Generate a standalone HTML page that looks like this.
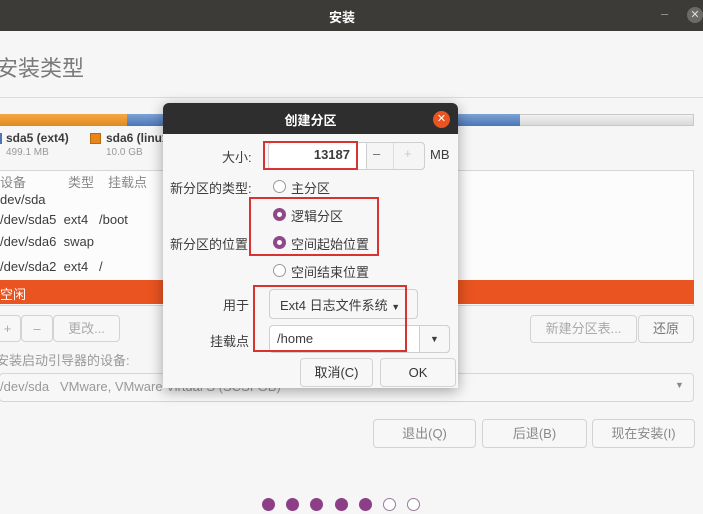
<!DOCTYPE html>
<html><head><meta charset="utf-8"><style>
*{margin:0;padding:0;box-sizing:border-box}
body{width:703px;height:514px;overflow:hidden;background:#f6f6f6;position:relative;font-family:"Liberation Sans","Noto Sans CJK SC",sans-serif;font-size:13px;color:#3c3c3c}
.a{position:absolute;white-space:nowrap}
.btn{position:absolute;border:1px solid #d3d3d3;border-radius:4px;background:#f7f7f7;color:#aaa;text-align:center;font-size:13px}
.rb{position:absolute;border:2px solid #d93232}
.radio{position:absolute;width:13px;height:13px;border-radius:50%;border:1px solid #9a9a9a;background:#fff}
.radio.on{border:none;background:#8f4889}
.radio.on::after{content:"";position:absolute;left:4px;top:4px;width:5px;height:5px;border-radius:50%;background:#fff}
.dot{position:absolute;top:498px;width:13px;height:13px;border-radius:50%;background:#8c3f86}
.dot.o{background:#fff;border:1px solid #9a7a98}
</style></head><body>
<div class="a" style="left:0;top:0;width:703px;height:31px;background:#3c3b37"></div>
<div class="a" style="left:0;top:7px;width:684px;text-align:center;color:#fff;font-weight:bold;font-size:13px">安装</div>
<div class="a" style="left:661px;top:6px;color:#999;font-size:13px">–</div>
<div class="a" style="left:687px;top:7px;width:16px;height:16px;border-radius:50%;background:#6b6a66;color:#ddd;font-size:11px;text-align:center;line-height:16px">✕</div>
<div class="a" style="left:-4px;top:51px;font-size:22px;color:#7a7a7a">安装类型</div>
<div class="a" style="left:0;top:97px;width:703px;height:1px;background:#dcdcdc"></div>
<!-- bar -->
<div class="a" style="left:0;top:114px;width:694px;height:12px;background:linear-gradient(#f0f0f0,#d9d9d9);border:1px solid #c8c8c8"></div>
<div class="a" style="left:0;top:114px;width:127px;height:12px;background:linear-gradient(#f4a84a,#e08a20)"></div>
<div class="a" style="left:127px;top:114px;width:393px;height:12px;background:linear-gradient(#7ea1d4,#4a76b8)"></div>
<div class="a" style="left:-4px;top:133px;width:6px;height:11px;background:#4a76b8"></div>
<div class="a" style="left:6px;top:131px;font-weight:bold;font-size:12px">sda5 (ext4)</div>
<div class="a" style="left:6px;top:147px;font-size:10px;color:#999">499.1 MB</div>
<div class="a" style="left:90px;top:133px;width:11px;height:11px;background:#e8861a;border:1px solid #b86a10"></div>
<div class="a" style="left:106px;top:131px;font-weight:bold;font-size:12px">sda6 (linux-swap)</div>
<div class="a" style="left:106px;top:147px;font-size:10px;color:#999">10.0 GB</div>
<!-- table -->
<div class="a" style="left:-1px;top:170px;width:695px;height:136px;border:1px solid #d6d6d6;background:#fcfcfc"></div>
<div class="a" style="left:0;top:172px;color:#888">设备</div>
<div class="a" style="left:68px;top:172px;color:#888">类型</div>
<div class="a" style="left:108px;top:172px;color:#888">挂载点</div>
<div class="a" style="left:0;top:192px">dev/sda</div>
<div class="a" style="left:0;top:212px">/dev/sda5 &nbsp;ext4 &nbsp;&nbsp;/boot</div>
<div class="a" style="left:0;top:234px">/dev/sda6 &nbsp;swap</div>
<div class="a" style="left:0;top:259px">/dev/sda2 &nbsp;ext4 &nbsp;&nbsp;/</div>
<div class="a" style="left:0;top:280px;width:694px;height:24px;background:#e95420"></div>
<div class="a" style="left:0;top:284px;color:#fff">空闲</div>
<div class="btn" style="left:-6px;top:315px;width:27px;height:27px;line-height:25px">+</div>
<div class="btn" style="left:21px;top:315px;width:32px;height:27px;line-height:25px">–</div>
<div class="btn" style="left:53px;top:315px;width:67px;height:27px;line-height:25px">更改...</div>
<div class="btn" style="left:530px;top:315px;width:107px;height:28px;line-height:26px">新建分区表...</div>
<div class="btn" style="left:638px;top:315px;width:56px;height:28px;line-height:26px;color:#777">还原</div>
<div class="a" style="left:-4px;top:350px;color:#999">安装启动引导器的设备:</div>
<div class="a" style="left:-1px;top:373px;width:695px;height:29px;border:1px solid #d6d6d6;border-radius:4px;background:#f7f7f7"></div>
<div class="a" style="left:0;top:379px;color:#999">/dev/sda &nbsp;&nbsp;VMware, VMware Virtual S (SCSI-GB)</div>
<div class="a" style="left:675px;top:380px;color:#888;font-size:9px">▼</div>
<div class="btn" style="left:373px;top:419px;width:103px;height:29px;line-height:27px;color:#888">退出(Q)</div>
<div class="btn" style="left:482px;top:419px;width:105px;height:29px;line-height:27px;color:#888">后退(B)</div>
<div class="btn" style="left:592px;top:419px;width:103px;height:29px;line-height:27px;color:#888">现在安装(I)</div>
<div class="dot" style="left:262px"></div><div class="dot" style="left:286px"></div><div class="dot" style="left:310px"></div><div class="dot" style="left:335px"></div><div class="dot" style="left:359px"></div><div class="dot o" style="left:383px"></div><div class="dot o" style="left:407px"></div>
<!-- dialog -->
<div class="a" style="left:163px;top:103px;width:295px;height:285px;background:#f7f7f7;border-radius:6px 6px 0 0;box-shadow:0 3px 14px rgba(0,0,0,.35)"></div>
<div class="a" style="left:163px;top:103px;width:295px;height:31px;background:#2e2e2e;border-radius:6px 6px 0 0"></div>
<div class="a" style="left:163px;top:110px;width:295px;text-align:center;color:#fff;font-weight:bold">创建分区</div>
<div class="a" style="left:433px;top:111px;width:17px;height:17px;border-radius:50%;background:#e95420;color:#fff;font-size:11px;text-align:center;line-height:17px">✕</div>
<div class="a" style="left:222px;top:147px">大小:</div>
<div class="a" style="left:268px;top:142px;width:157px;height:28px;border:1px solid #cfcfcf;border-radius:4px;background:#fff"></div>
<div class="a" style="left:366px;top:142px;width:59px;height:28px;background:#f5f5f5;border:1px solid #cfcfcf;border-radius:0 4px 4px 0"></div>
<div class="a" style="left:393px;top:143px;width:1px;height:26px;background:#ddd"></div>
<div class="a" style="left:373px;top:146px;color:#666">–</div>
<div class="a" style="left:404px;top:146px;color:#ccc">+</div>
<div class="a" style="left:300px;top:147px;width:50px;text-align:right;font-weight:bold">13187</div>
<div class="a" style="left:430px;top:147px">MB</div>
<div class="rb" style="left:263px;top:141px;width:95px;height:29px"></div>
<div class="a" style="left:170px;top:178px">新分区的类型:</div>
<div class="radio" style="left:273px;top:180px"></div><div class="a" style="left:291px;top:178px">主分区</div>
<div class="radio on" style="left:273px;top:208px"></div><div class="a" style="left:291px;top:206px">逻辑分区</div>
<div class="a" style="left:170px;top:234px">新分区的位置:</div>
<div class="radio on" style="left:273px;top:236px"></div><div class="a" style="left:291px;top:234px">空间起始位置</div>
<div class="rb" style="left:249px;top:197px;width:130px;height:59px"></div>
<div class="radio" style="left:273px;top:264px"></div><div class="a" style="left:291px;top:262px">空间结束位置</div>
<div class="a" style="left:223px;top:295px">用于</div>
<div class="a" style="left:269px;top:289px;width:149px;height:30px;border:1px solid #cfcfcf;border-radius:4px;background:#f7f7f7"></div>
<div class="a" style="left:280px;top:295px">Ext4 日志文件系统 <span style="font-size:9px">▼</span></div>
<div class="a" style="left:210px;top:331px">挂载点</div>
<div class="a" style="left:269px;top:325px;width:181px;height:28px;border:1px solid #cfcfcf;border-radius:4px;background:#fff"></div>
<div class="a" style="left:419px;top:325px;width:31px;height:28px;border:1px solid #cfcfcf;border-radius:0 4px 4px 0;background:#f7f7f7;text-align:center;font-size:9px;line-height:26px">▼</div>
<div class="a" style="left:277px;top:331px">/home</div>
<div class="rb" style="left:253px;top:285px;width:154px;height:67px"></div>
<div class="btn" style="left:300px;top:358px;width:73px;height:29px;line-height:27px;color:#333">取消(C)</div>
<div class="btn" style="left:380px;top:358px;width:76px;height:29px;line-height:27px;color:#333">OK</div>
</body></html>
